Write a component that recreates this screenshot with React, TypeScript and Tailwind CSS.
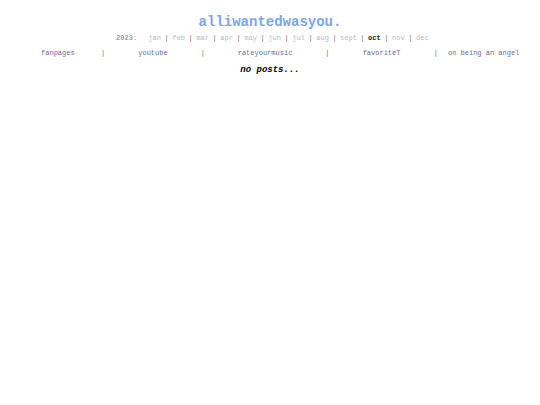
import { Fragment } from 'react';

const months = ['jan', 'feb', 'mar', 'apr', 'may', 'jun', 'jul', 'aug', 'sept', 'oct', 'nov', 'dec'];

const current = 'oct';

const links = ['fanpages', 'youtube', 'rateyourmusic', 'favoriteT', 'on being an angel'];

const Archive = () => {
  return (
    <nav
      className="mt-1 flex justify-center whitespace-pre pl-[5px] text-[7px] leading-[8px] text-[#6f6f7c]"
      aria-label="Archive"
    >
      <span className="mr-[11px] text-[#9c9cb8]">
        <b>2023</b>:
      </span>
      {months.map((month, i) => (
        <Fragment key={month}>
          {i > 0 && <span className="w-[11px] text-center">|</span>}
          <a
            href={`#${month}`}
            className={
              month === current
                ? 'w-[13px] text-center font-bold text-[#1c1c1c]'
                : 'min-w-[13px] text-center text-[#b8b8c6]'
            }
          >
            {month}
          </a>
        </Fragment>
      ))}
    </nav>
  );
};

const Links = () => {
  return (
    <nav
      className="mt-[7px] grid grid-cols-[84fr_7fr_93fr_7fr_118fr_7fr_102fr_7fr_89fr] whitespace-nowrap pl-4 pr-3 text-center text-[7px] leading-[8px] text-[#6f6f7c]"
      aria-label="Links"
    >
      {links.map((link, i) => (
        <Fragment key={link}>
          {i > 0 && <span>|</span>}
          <a href="#" className="text-[#6c6c98]">
            {link}
          </a>
        </Fragment>
      ))}
    </nav>
  );
};

const App = () => {
  return (
    <div className="min-h-screen bg-white pt-[14px] font-['Liberation_Mono',monospace]">
      <header>
        <h1 className="text-center text-[14px] font-bold leading-[16px] text-[#7ba6ec]">
          <a href="#">alliwantedwasyou.</a>
        </h1>
        <Archive />
        <Links />
      </header>
      <main className="mt-2 text-center text-[9px] font-bold italic leading-[10px] text-black">
        <p>no posts...</p>
      </main>
    </div>
  );
};

export default App;
